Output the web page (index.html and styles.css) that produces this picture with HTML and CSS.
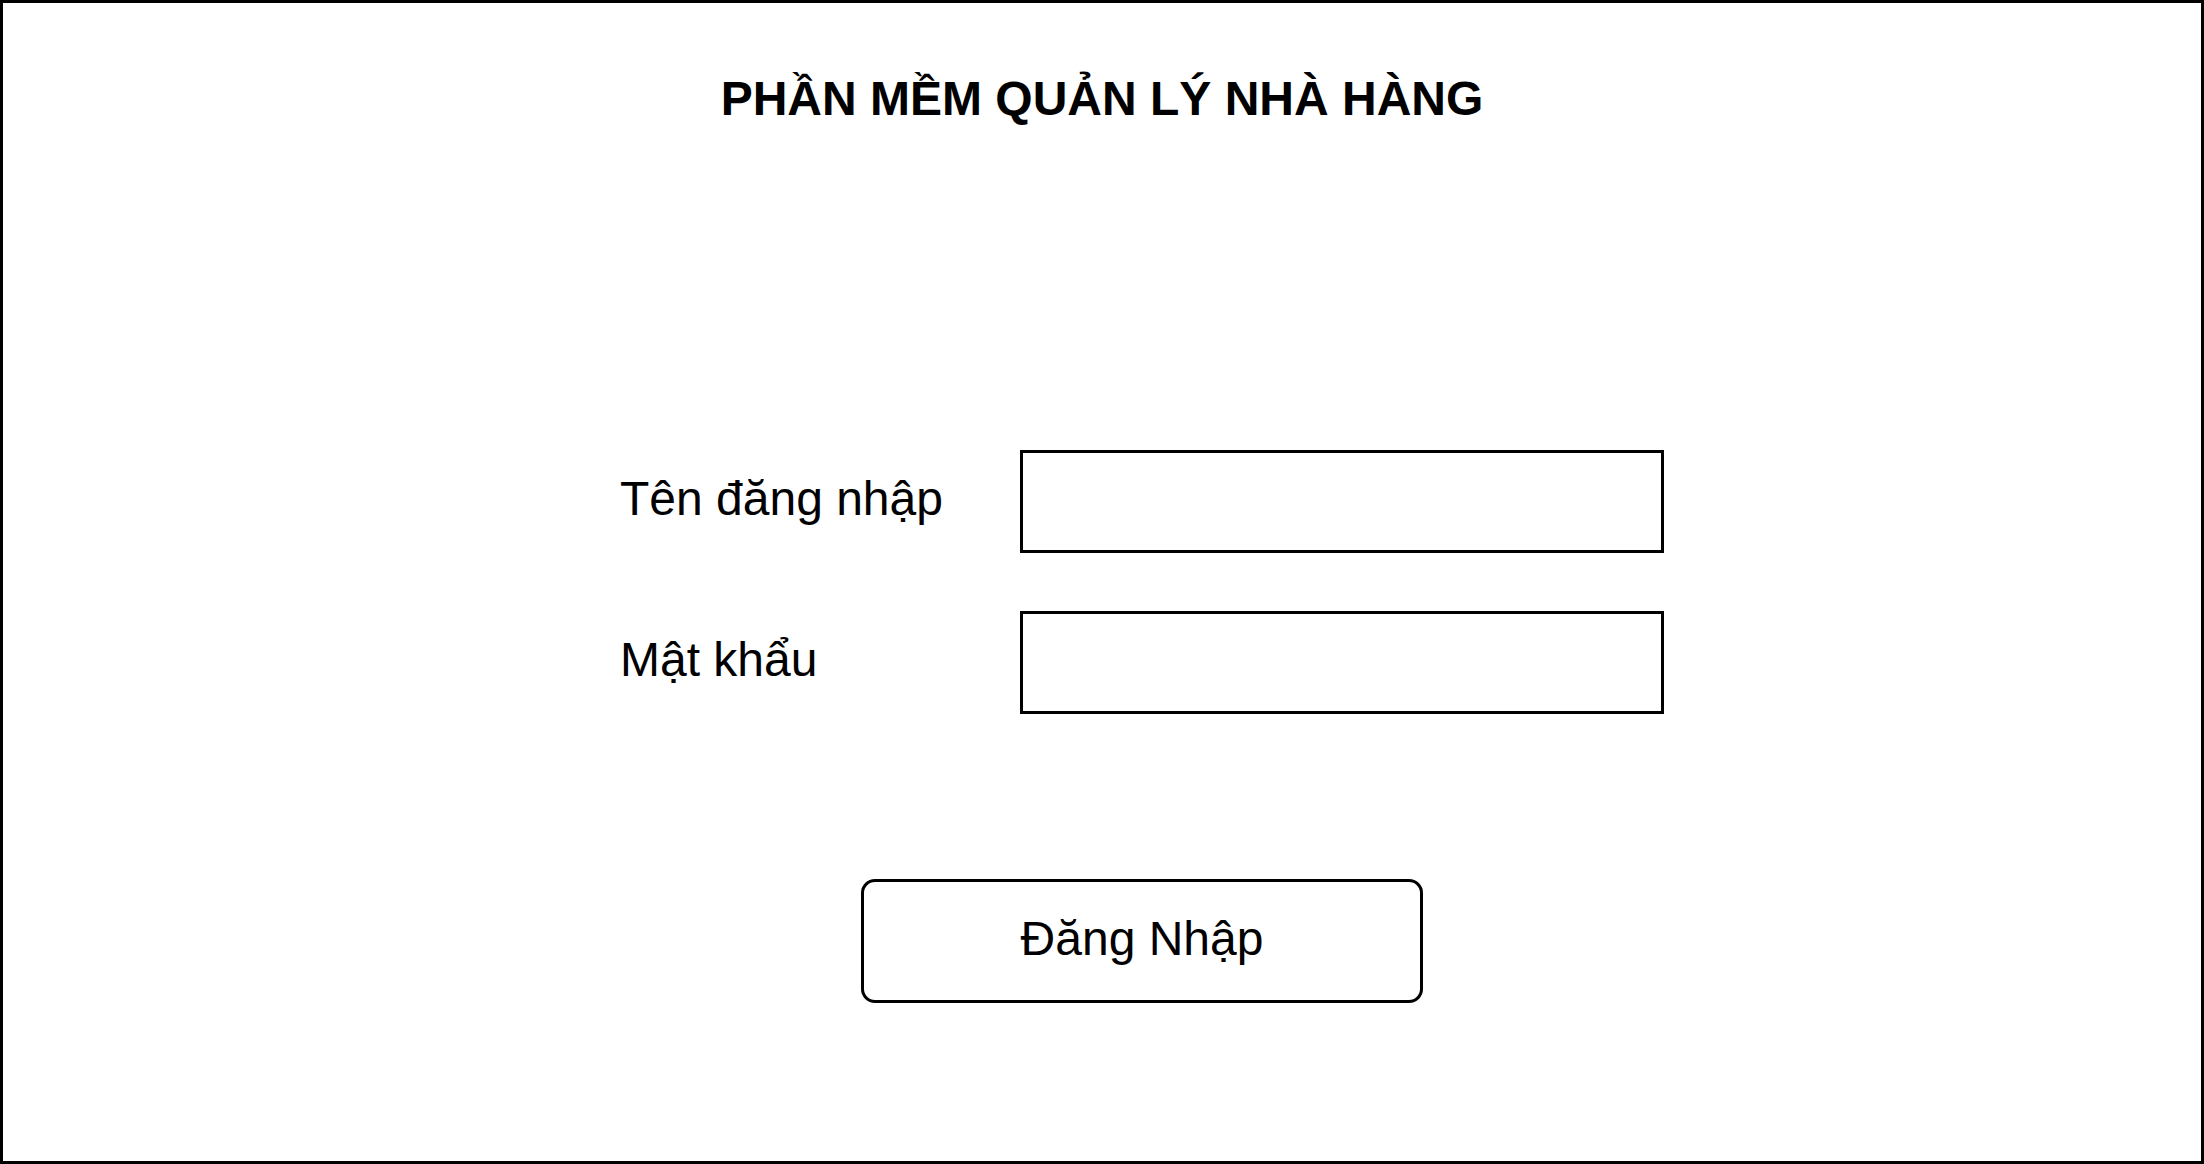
FILE: index.html
```html
<!DOCTYPE html>
<html lang="vi">
<head>
<meta charset="utf-8">
<title>Phần mềm quản lý nhà hàng</title>
<link rel="stylesheet" href="styles.css">
</head>
<body>
<div class="frame">
  <h1 class="title">PHẦN MỀM QUẢN LÝ NHÀ HÀNG</h1>
  <form class="login">
    <div class="row">
      <label class="label" for="user">Tên đăng nhập</label>
      <input class="field" id="user" type="text">
    </div>
    <div class="row">
      <label class="label" for="pass">Mật khẩu</label>
      <input class="field" id="pass" type="password">
    </div>
    <button class="submit" type="button">Đăng Nhập</button>
  </form>
</div>
</body>
</html>
```
FILE: styles.css
```css
html, body {
  margin: 0;
  padding: 0;
  background: #fff;
}
body {
  font-family: "Liberation Sans", Arial, sans-serif;
  color: #000;
}
.frame {
  box-sizing: border-box;
  width: 2204px;
  height: 1164px;
  border: 3px solid #000;
  padding-top: 69px;
  display: flex;
  flex-direction: column;
}
.title {
  margin: 0;
  font-size: 48px;
  line-height: 54px;
  font-weight: bold;
  text-align: center;
}
.login {
  margin: 324px 0 0 617px;
  width: 1044px;
  display: flex;
  flex-direction: column;
  gap: 58px;
}
.row {
  display: flex;
  align-items: center;
}
.label {
  width: 400px;
  font-size: 48px;
  line-height: 54px;
  padding-bottom: 5px;
}
.field {
  box-sizing: border-box;
  width: 644px;
  height: 103px;
  border: 3px solid #000;
  border-radius: 0;
  margin: 0;
  padding: 0;
  background: #fff;
  outline: none;
}
.submit {
  box-sizing: border-box;
  align-self: center;
  margin-top: 107px;
  width: 562px;
  height: 124px;
  border: 3px solid #000;
  border-radius: 14px;
  background: #fff;
  font-family: "Liberation Sans", Arial, sans-serif;
  font-size: 48px;
  color: #000;
  padding: 0 0 5px 0;
}
```
